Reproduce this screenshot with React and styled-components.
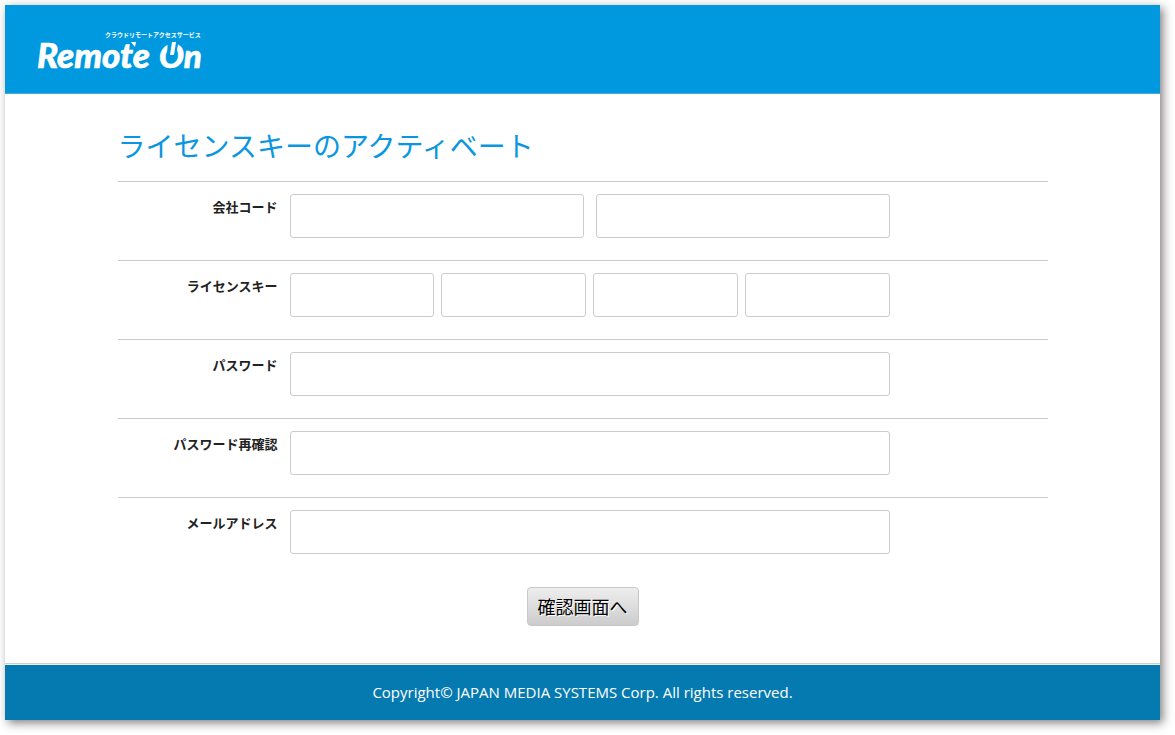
import { useState } from 'react';
import styled, { createGlobalStyle } from 'styled-components';

const GlobalStyle = createGlobalStyle`
  *, *::before, *::after {
    box-sizing: border-box;
  }

  body {
    margin: 0;
    background: #ffffff;
    color: #222222;
    font-family: 'Open Sans', 'Noto Sans CJK JP', sans-serif;
  }
`;

// --- PAGE FRAME ---
const Page = styled.div`
  margin: 5px 15px 15px 5px;
  background: #ffffff;
  box-shadow: 3px 3px 9px rgba(50, 40, 40, 0.6);
`;

const Header = styled.header`
  padding: 24px 32px 14px;
  background: #0099df;
  border-bottom: 1px solid #4aa9dc;
`;

const LogoSvg = styled.svg`
  display: block;
  fill: #ffffff;
`;

const Tagline = styled.text`
  font: 700 6px 'Noto Sans CJK JP', sans-serif;
`;

const Wordmark = styled.text`
  font: italic 900 ${props => props.$size}px Lato, sans-serif;
  stroke: #ffffff;
  stroke-width: 0.6px;
`;

const Main = styled.main`
  max-width: 930px;
  margin: 0 auto;
  padding: 31px 0 37px;
`;

const Title = styled.h1`
  margin: 0 0 16px;
  color: #0a96e0;
  font-family: 'Noto Sans CJK JP', sans-serif;
  font-size: 28px;
  font-weight: 400;
  line-height: 40px;
`;

// --- FORM ---
const Row = styled.div`
  display: grid;
  grid-template-columns: 160px minmax(0, 600px);
  column-gap: 12px;
  padding: 12px 0 22px;
  border-top: 1px solid #cccccc;
`;

const Label = styled.label`
  color: #222222;
  font-family: 'Noto Sans CJK JP', sans-serif;
  font-size: 13px;
  font-weight: 700;
  line-height: 26px;
  text-align: right;
`;

const Fields = styled.div`
  display: flex;
  gap: ${props => props.$gap || 0}px;
`;

const TextBox = styled.input`
  flex: 1;
  min-width: 0;
  height: 44px;
  padding: 8px 10px;
  border: 1px solid #cccccc;
  border-radius: 3px;
  background: #ffffff;
  font: 16px 'Open Sans', 'Noto Sans CJK JP', sans-serif;

  &:focus {
    outline: none;
    border-color: #0099df;
  }
`;

const Actions = styled.div`
  display: flex;
  justify-content: center;
  padding-top: 11px;
`;

const SubmitButton = styled.button`
  padding: 5px 10px 6px;
  border: 1px solid #c8c8c8;
  border-radius: 4px;
  background: linear-gradient(#eeeeee, #cccccc);
  color: #000000;
  font-family: 'Noto Sans CJK JP', sans-serif;
  font-size: 18px;
  line-height: 26px;
  text-shadow: 1px 1px 0 #ffffff;
  cursor: pointer;

  &:hover {
    background: linear-gradient(#f6f6f6, #d6d6d6);
  }
`;

const Footer = styled.footer`
  border-top: 1px solid #d8ccc0;
  box-shadow: inset 0 1px 0 #e2f5fb;
  background: #057ab0;
  padding: 16px 20px;
  color: #ffffff;
  font-size: 15px;
  line-height: 24px;
  text-align: center;
`;

const rows = [
  { label: '会社コード', names: ['company1', 'company2'], gap: 12 },
  { label: 'ライセンスキー', names: ['key1', 'key2', 'key3', 'key4'], gap: 7 },
  { label: 'パスワード', names: ['password'], type: 'password' },
  { label: 'パスワード再確認', names: ['passwordConfirm'], type: 'password' },
  { label: 'メールアドレス', names: ['email'], type: 'email' },
];

const Logo = () => (
  <LogoSvg width="172" height="50" viewBox="0 0 172 50">
    <Tagline x="68" y="8">クラウドリモートアクセスサービス</Tagline>
    <Wordmark $size={35} x="0" y="39">Remote</Wordmark>
    <Wordmark $size={33} x="122" y="39">On</Wordmark>
    {/* power mark cut into the O */}
    <path d="M131 10 L142 10 L139 26 L130 26 Z" fill="#0099df" />
    <path d="M135 13 L139 13 L137 26 L133 26 Z" />
    <path d="M94 13 L99 13 L98 18 Z" />
  </LogoSvg>
);

const App = () => {
  const [values, setValues] = useState({});

  const handleChange = (e) => {
    setValues({ ...values, [e.target.name]: e.target.value });
  };

  return (
    <>
      <GlobalStyle />
      <Page lang="ja">
        <Header>
          <Logo />
        </Header>
        <Main>
          <Title>ライセンスキーのアクティベート</Title>
          <form onSubmit={(e) => e.preventDefault()}>
            {rows.map(row => (
              <Row key={row.label}>
                <Label id={`${row.names[0]}-label`} htmlFor={row.names[0]}>{row.label}</Label>
                <Fields $gap={row.gap}>
                  {row.names.map(name => (
                    <TextBox
                      key={name}
                      id={name}
                      name={name}
                      type={row.type || 'text'}
                      aria-labelledby={`${row.names[0]}-label`}
                      value={values[name] || ''}
                      onChange={handleChange}
                    />
                  ))}
                </Fields>
              </Row>
            ))}
            <Actions>
              <SubmitButton type="submit">確認画面へ</SubmitButton>
            </Actions>
          </form>
        </Main>
        <Footer>Copyright© JAPAN MEDIA SYSTEMS Corp. All rights reserved.</Footer>
      </Page>
    </>
  );
};

export default App;
